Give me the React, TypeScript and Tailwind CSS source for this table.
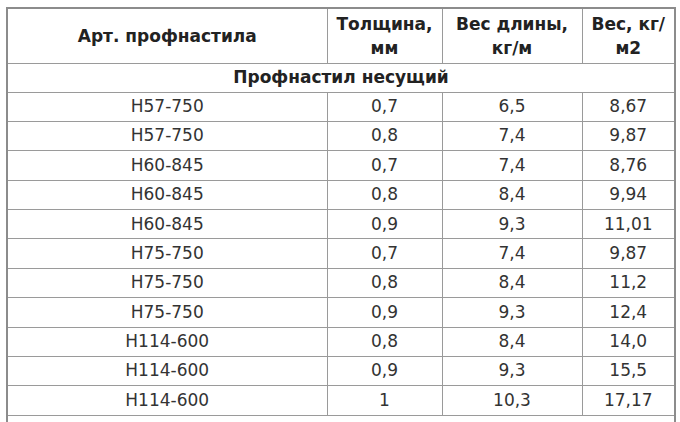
import React from "react";

const rows: [string, string, string, string][] = [
  ["Н57-750", "0,7", "6,5", "8,67"],
  ["Н57-750", "0,8", "7,4", "9,87"],
  ["Н60-845", "0,7", "7,4", "8,76"],
  ["Н60-845", "0,8", "8,4", "9,94"],
  ["Н60-845", "0,9", "9,3", "11,01"],
  ["Н75-750", "0,7", "7,4", "9,87"],
  ["Н75-750", "0,8", "8,4", "11,2"],
  ["Н75-750", "0,9", "9,3", "12,4"],
  ["Н114-600", "0,8", "8,4", "14,0"],
  ["Н114-600", "0,9", "9,3", "15,5"],
  ["Н114-600", "1", "10,3", "17,17"],
];

export default function App() {
  const cell = "border border-[#9a9a9a] text-center align-middle p-0";
  return (
    <div className="w-[680px] h-[422px] overflow-hidden bg-white pl-[6px] pt-[7px] text-[#333] text-[17px] font-['DejaVu_Sans',sans-serif]">
      <table className="table-fixed border-collapse border-2 border-[#8c8c8c] w-[668px]">
        <colgroup>
          <col className="w-[320px]" />
          <col className="w-[115px]" />
          <col className="w-[140px]" />
          <col className="w-[93px]" />
        </colgroup>
        <tbody>
          <tr className="h-[55px] font-bold leading-[24px] text-[#222]">
            <td className={cell}>Арт. профнастила</td>
            <td className={cell}>Толщина,<br />мм</td>
            <td className={cell}>Вес длины,<br />кг/м</td>
            <td className={cell}>Вес, кг/<br />м2</td>
          </tr>
          <tr className="h-[29px] font-bold text-[#222]">
            <td className={cell} colSpan={4}>Профнастил несущий</td>
          </tr>
          {rows.map((r, i) => (
            <tr key={i} className="h-[29.4px]">
              {r.map((c, j) => (
                <td key={j} className={cell}>{c}</td>
              ))}
            </tr>
          ))}
          <tr className="h-[29px]">
            <td className={cell} colSpan={4}></td>
          </tr>
        </tbody>
      </table>
    </div>
  );
}
